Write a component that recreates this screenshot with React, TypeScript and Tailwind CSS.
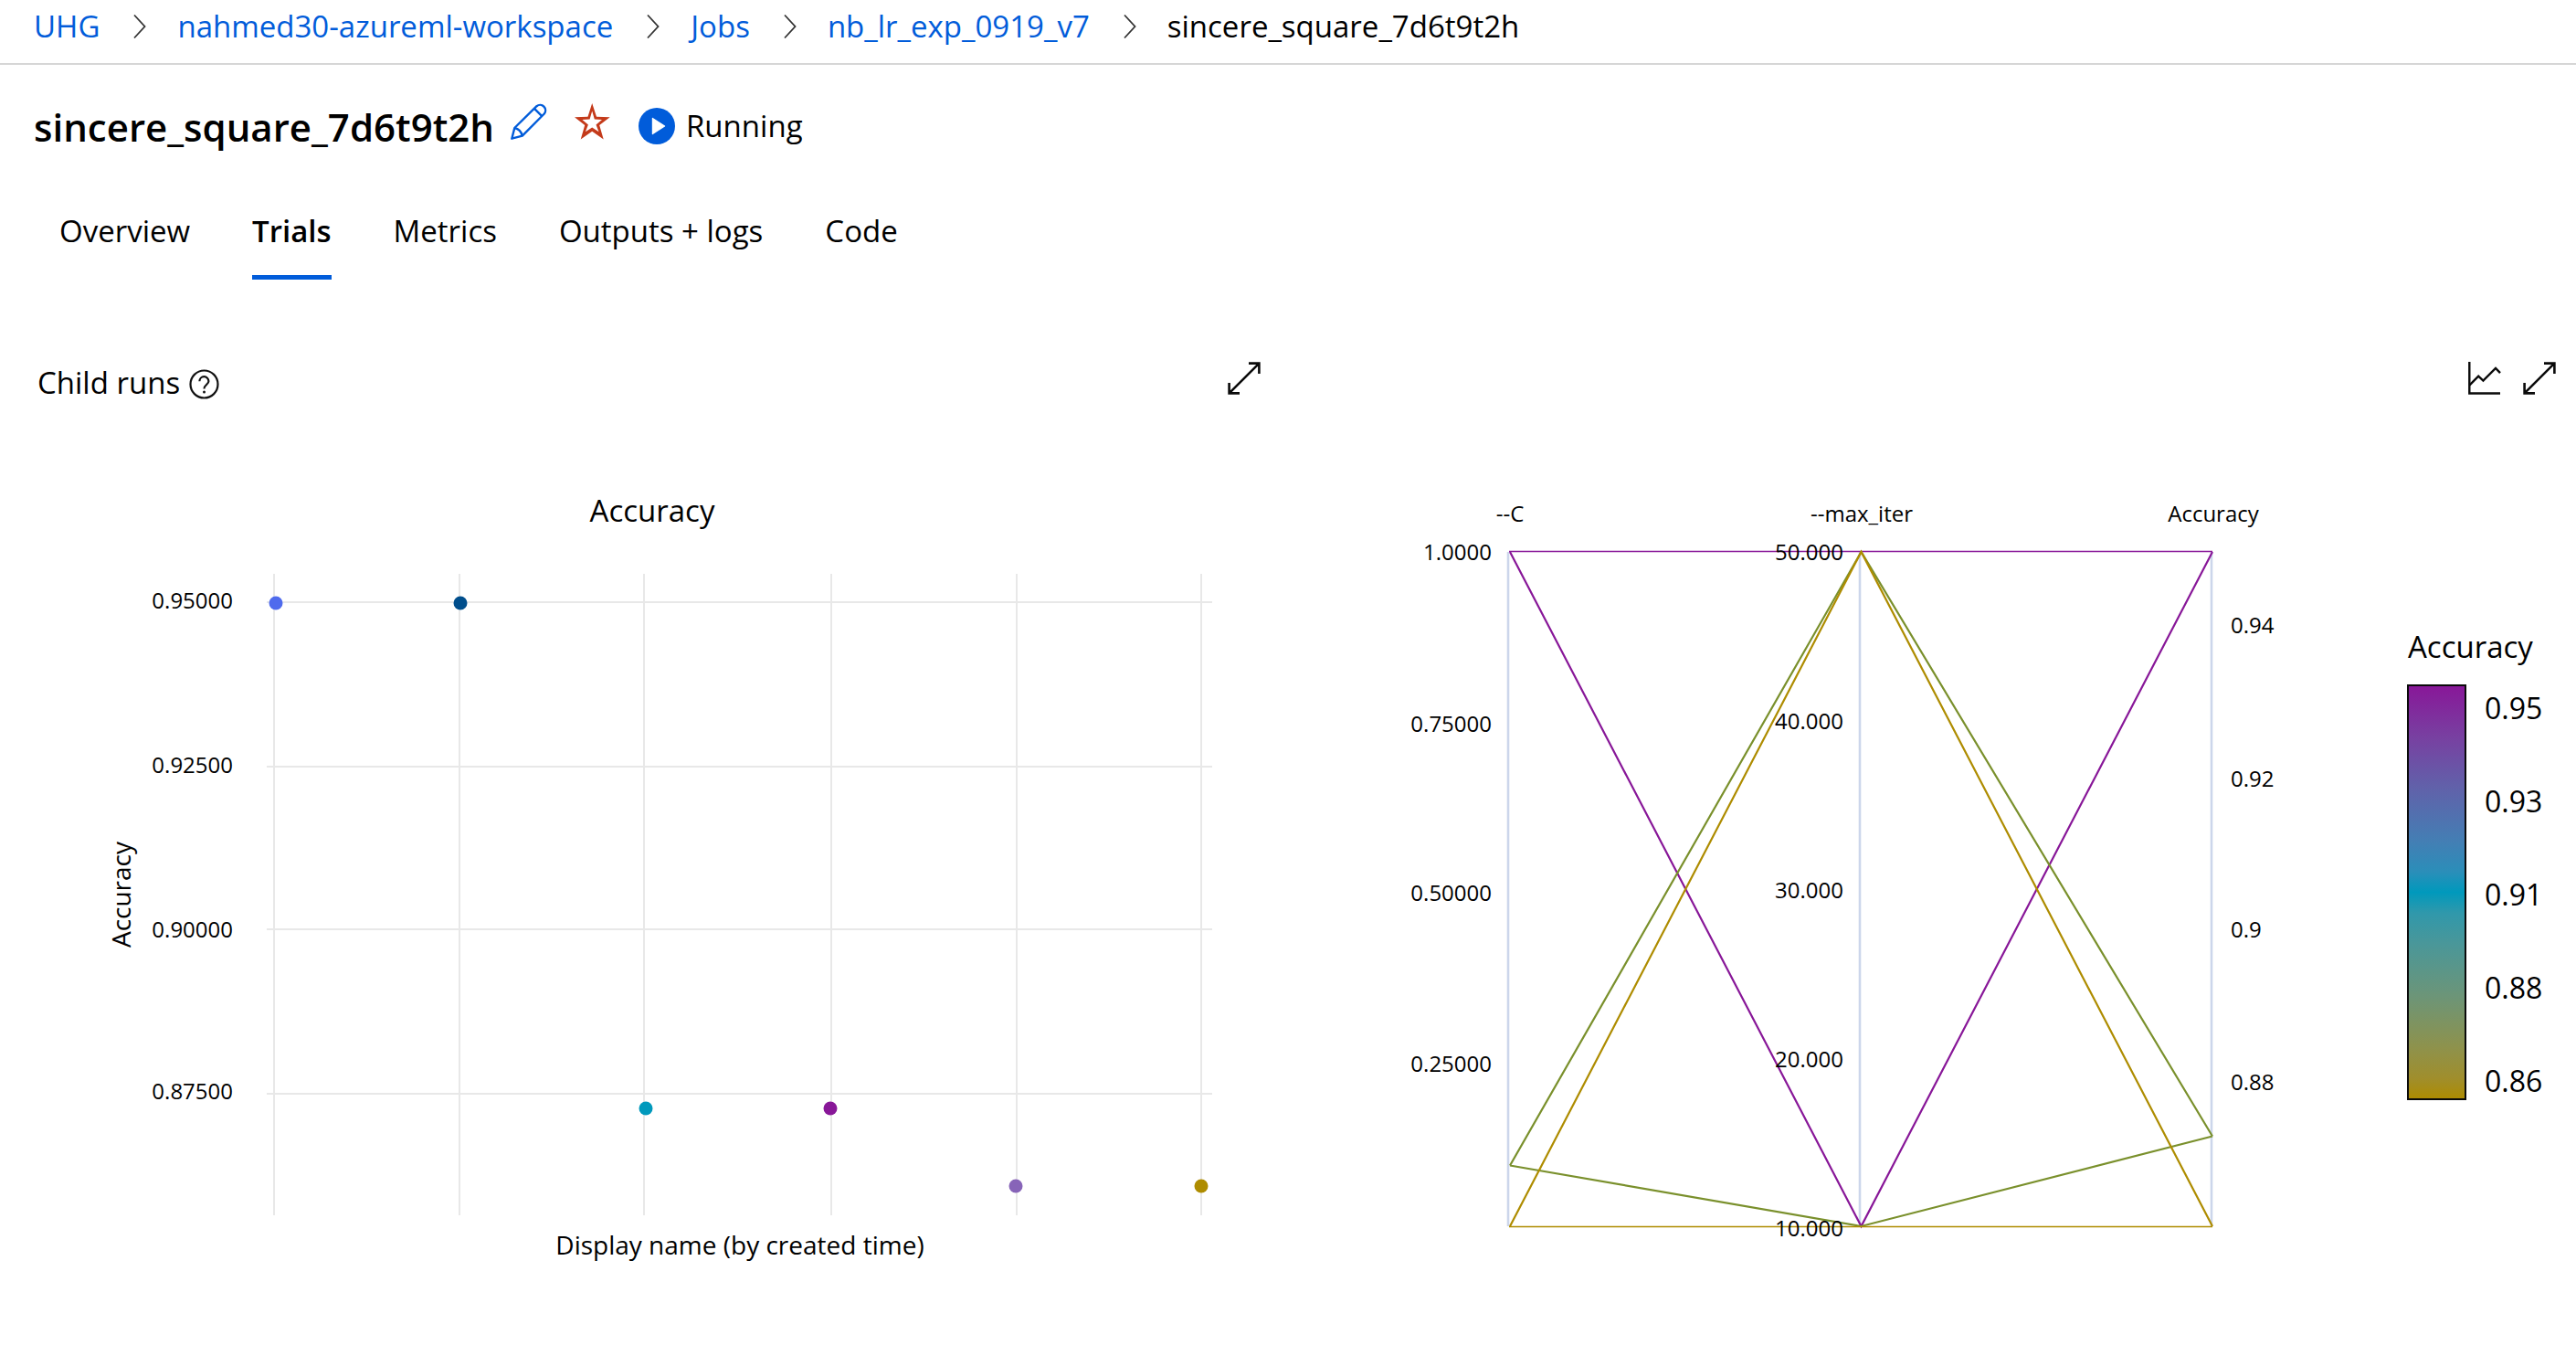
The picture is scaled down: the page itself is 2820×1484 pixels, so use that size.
import { Fragment } from "react";

const crumbs = ["UHG", "nahmed30-azureml-workspace", "Jobs", "nb_lr_exp_0919_v7"];
const tabs = ["Overview", "Trials", "Metrics", "Outputs + logs", "Code"];

function Chevron() {
  return (
    <svg viewBox="0 0 14 32" className="mr-[34px] ml-[37px] h-8 w-[14px]" fill="none" stroke="#333" strokeWidth="1.8" aria-hidden="true">
      <path d="M1 3.5 12.5 16 1 28.5" />
    </svg>
  );
}

function PencilIcon() {
  return (
    <svg viewBox="0 0 40 50" className="h-[50px] w-10" fill="none" stroke="#015cda" strokeWidth="2.4" strokeLinejoin="round" aria-hidden="true">
      <path d="M1.3 38.7 4.3 27 28.5 3.2A5.9 5.9 0 0 1 36.8 11.5L12.8 35.6Z" />
      <path d="M4.3 27Q11 28.5 12.8 35.6M26 5.8 34.3 14.1" />
    </svg>
  );
}

function StarIcon() {
  return (
    <svg viewBox="0 0 40 50" className="h-[50px] w-10" fill="#c43a1a" fillRule="evenodd" aria-hidden="true">
      <path d="M19.2 0 24 14.8 38.7 15.2 27.2 24 31.7 39.5 19.2 30.8 6.7 39.5 11.2 24 0 15.2 14.5 14.8ZM19.2 8.5 16.6 17.5 8.4 18 14.9 23.5 11.9 31.2 19.2 26.4 26.5 31.2 23.5 23.5 30 18 21.8 17.5Z" />
    </svg>
  );
}

function RunningIcon() {
  return (
    <svg viewBox="0 0 40 40" className="size-10" aria-hidden="true">
      <circle cx="20" cy="20" r="20" fill="#015cda" />
      <path d="M15.4 11.4 28.6 20 15.4 28.6Z" fill="#fff" stroke="#fff" strokeWidth="1.2" strokeLinejoin="round" />
    </svg>
  );
}

function HelpIcon() {
  return (
    <svg viewBox="0 0 33 36" className="h-9 w-[33px]" fill="none" stroke="#111" strokeWidth="2.2" aria-hidden="true">
      <circle cx="16.5" cy="19.5" r="15" />
      <path d="M11.4 16.2A5 5 0 0 1 21.4 16.2C21.4 19.6 16.5 20 16.5 24.6" />
      <circle cx="16.5" cy="28" r="1.5" fill="#111" stroke="none" />
    </svg>
  );
}

function ExpandIcon() {
  return (
    <svg viewBox="0 0 36 46" className="h-[46px] w-9" fill="none" stroke="#0a0a0a" strokeWidth="2.6" aria-hidden="true">
      <path d="M23 1.6H34.4V13M34.4 1.6 1.6 34.4M1.6 23V34.4H13" />
    </svg>
  );
}

function ChartIcon() {
  return (
    <svg viewBox="0 0 36 46" className="h-[46px] w-9" fill="none" stroke="#0a0a0a" strokeWidth="2.4" aria-hidden="true">
      <path d="M1.3 0V34.5H35" />
      <path d="M1.6 25.4 11.2 15.6 16.4 20.6 30 7 35 12.2" />
    </svg>
  );
}

const gridX = [300, 503, 705, 910, 1113, 1315];
const gridY = [
  { y: 209, label: "0.95000", base: 216 },
  { y: 389, label: "0.92500", base: 396 },
  { y: 567, label: "0.90000", base: 576 },
  { y: 747, label: "0.87500", base: 753 },
];
const runs = [
  { x: 302, y: 210, color: "#4f6bed" },
  { x: 504, y: 210, color: "#004e8c" },
  { x: 707, y: 763, color: "#0099bc" },
  { x: 909, y: 763, color: "#881798" },
  { x: 1112, y: 848, color: "#8764b8" },
  { x: 1315, y: 848, color: "#ae8c00" },
];

function ScatterChart() {
  return (
    <svg viewBox="0 0 1410 1000" className="block w-full" role="img" aria-label="Accuracy by created time">
      <text x="714" y="121" textAnchor="middle" className="text-[33px]">Accuracy</text>
      <g stroke="#e8e8e8" strokeWidth="2">
        {gridX.map((x) => <path key={x} d={`M${x} 178V880`} />)}
        {gridY.map((g) => <path key={g.y} d={`M292 ${g.y}H1327`} />)}
      </g>
      {gridY.map((g) => (
        <text key={g.label} x="255" y={g.base} textAnchor="end" className="text-[24px]">{g.label}</text>
      ))}
      {runs.map((r) => <circle key={r.x} cx={r.x} cy={r.y} r="7.5" fill={r.color} />)}
      <text transform="translate(143 529) rotate(-90)" textAnchor="middle" className="text-[28px]">Accuracy</text>
      <text x="810" y="923" textAnchor="middle" className="text-[28px]">Display name (by created time)</text>
    </svg>
  );
}

const axes = [
  { x: 241, name: "--C" },
  { x: 626, name: "--max_iter" },
  { x: 1011, name: "Accuracy" },
];
const axisTicks = [
  { x: 223, y: 163, label: "1.0000" },
  { x: 223, y: 351, label: "0.75000" },
  { x: 223, y: 536, label: "0.50000" },
  { x: 223, y: 723, label: "0.25000" },
  { x: 608, y: 163, label: "50.000" },
  { x: 608, y: 348, label: "40.000" },
  { x: 608, y: 533, label: "30.000" },
  { x: 608, y: 718, label: "20.000" },
  { x: 608, y: 903, label: "10.000" },
];
const accuracyTicks = [
  { y: 243, label: "0.94" },
  { y: 411, label: "0.92" },
  { y: 576, label: "0.9" },
  { y: 743, label: "0.88" },
];
const legend = [
  { y: 337, label: "0.95" },
  { y: 439, label: "0.93" },
  { y: 541, label: "0.91" },
  { y: 643, label: "0.88" },
  { y: 745, label: "0.86" },
];
const colorScale: [number, string][] = [
  [0, "#881798"],
  [0.125, "#7840a1"],
  [0.25, "#6062aa"],
  [0.375, "#447eb4"],
  [0.45, "#2b8eb9"],
  [0.5, "#0099bc"],
  [0.55, "#3098ab"],
  [0.625, "#4a9799"],
  [0.75, "#6c9578"],
  [0.875, "#8e924c"],
  [0.95, "#a08e2c"],
  [1, "#ae8c00"],
];

function ParallelChart() {
  return (
    <svg viewBox="0 0 1410 1000" className="block w-full" role="img" aria-label="Parallel coordinates of C, max_iter and Accuracy">
      <defs>
        <linearGradient id="scale" x1="0" y1="0" x2="0" y2="1">
          {colorScale.map(([offset, color]) => <stop key={offset} offset={offset} stopColor={color} />)}
        </linearGradient>
      </defs>
      {axes.map((a) => (
        <Fragment key={a.name}>
          <text x={a.x + 2} y="121" textAnchor="middle" className="text-[24px]">{a.name}</text>
          <path d={`M${a.x} 154V892`} stroke="#ccd6eb" strokeWidth="2.6" />
        </Fragment>
      ))}
      <g fill="none" strokeWidth="2.2">
        <path d="M242 153.5H1012" stroke="#881798" strokeWidth="1.4" />
        <path d="M243 154 627.5 892 1012 154" stroke="#881798" />
        <path d="M243 825.5 627.5 154 1012 793.5M243 825.5 627.5 892 1012 793.5" stroke="#7a902c" />
        <path d="M243 892 627.5 154 1012 892" stroke="#ae8c00" />
        <path d="M242 892.5H1012" stroke="#ae8c00" strokeWidth="1.4" />
      </g>
      {axisTicks.map((t) => (
        <text key={t.label} x={t.x} y={t.y} textAnchor="end" className="text-[24px]">{t.label}</text>
      ))}
      {accuracyTicks.map((t) => (
        <text key={t.label} x="1032" y={t.y} className="text-[24px]">{t.label}</text>
      ))}
      <text x="1226" y="270" className="text-[33px]">Accuracy</text>
      <rect x="1226" y="300" width="63" height="453" fill="url(#scale)" stroke="#0a0a0a" strokeWidth="2" />
      {legend.map((l) => (
        <text key={l.label} x="1310" y={l.y} className="text-[32px]">{l.label}</text>
      ))}
    </svg>
  );
}

export default function App() {
  return (
    <div className="bg-white font-['Open_Sans','Noto_Sans',sans-serif] text-[33px] text-black">
      <nav aria-label="Breadcrumb" className="flex h-[71px] items-center border-b-2 border-[#d6d6d6] pb-3 pl-[37px] whitespace-nowrap">
        {crumbs.map((c) => (
          <Fragment key={c}>
            <a href="#" className="text-[#015cda]">{c}</a>
            <Chevron />
          </Fragment>
        ))}
        <span aria-current="page">sincere_square_7d6t9t2h</span>
      </nav>

      <header className="mt-[37px] flex h-[60px] items-center pl-[37px] whitespace-nowrap">
        <h1 className="text-[42px] font-semibold">sincere_square_7d6t9t2h</h1>
        <button type="button" aria-label="Edit name" className="ml-[18px]"><PencilIcon /></button>
        <button type="button" aria-label="Favorite" className="ml-[30px]"><StarIcon /></button>
        <div className="ml-[30px] flex items-center gap-3">
          <RunningIcon />
          <span>Running</span>
        </div>
      </header>

      <div role="tablist" className="mt-[54px] flex gap-[68px] pl-[65px] whitespace-nowrap">
        {tabs.map((t) => (
          <button
            key={t}
            type="button"
            role="tab"
            aria-selected={t === "Trials"}
            className={
              t === "Trials"
                ? "border-b-[5px] border-[#015cda] pb-[17px] leading-[62px] font-semibold"
                : "border-b-[5px] border-transparent pb-[17px] leading-[62px]"
            }
          >
            {t}
          </button>
        ))}
      </div>

      <main className="mt-[88px] grid grid-cols-2">
        <section>
          <div className="flex h-[50px] items-center pr-[30px] pl-[41px]">
            <h2>Child runs</h2>
            <button type="button" aria-label="About child runs" className="ml-[10px]"><HelpIcon /></button>
            <button type="button" aria-label="Expand chart" className="ml-auto"><ExpandIcon /></button>
          </div>
          <div className="pt-1.5"><ScatterChart /></div>
        </section>
        <section>
          <div className="flex h-[50px] items-center justify-end gap-6 pr-[22px]">
            <button type="button" aria-label="Chart type"><ChartIcon /></button>
            <button type="button" aria-label="Expand chart"><ExpandIcon /></button>
          </div>
          <div className="pt-1.5"><ParallelChart /></div>
        </section>
      </main>
    </div>
  );
}
